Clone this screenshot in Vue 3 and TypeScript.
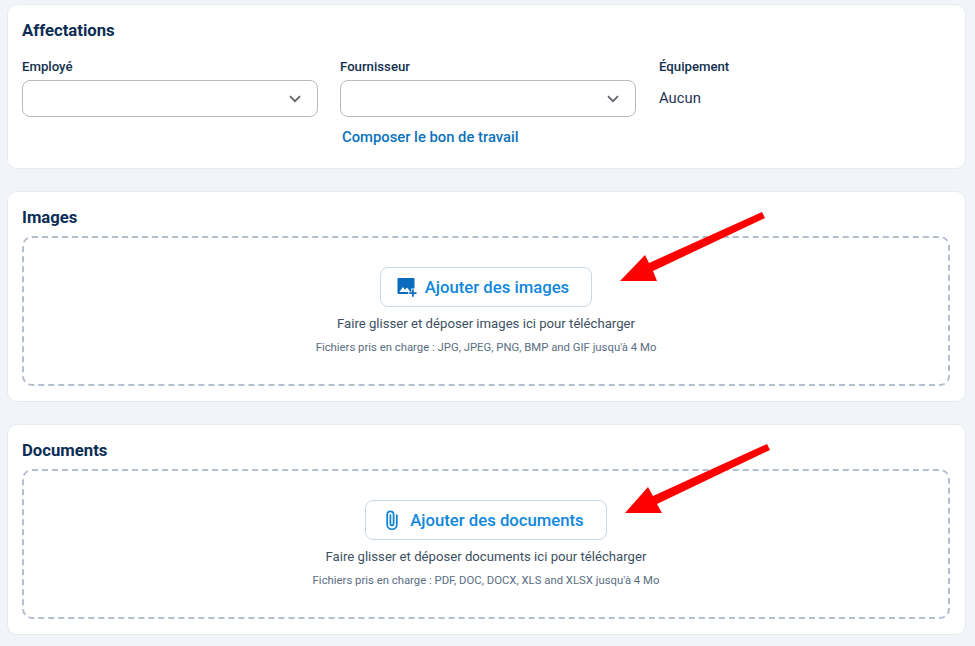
<template>
  <div class="page">
    <section class="card card-top">
      <h2 class="title">Affectations</h2>
      <div class="fields">
        <div class="field">
          <label class="label">Employé</label>
          <div class="select">
            <svg class="chevron" viewBox="0 0 12 8"><path d="M1 1.2l5 5 5-5" /></svg>
          </div>
        </div>
        <div class="field">
          <label class="label">Fournisseur</label>
          <div class="select">
            <svg class="chevron" viewBox="0 0 12 8"><path d="M1 1.2l5 5 5-5" /></svg>
          </div>
          <a class="link">Composer le bon de travail</a>
        </div>
        <div class="field">
          <label class="label">Équipement</label>
          <div class="value">Aucun</div>
        </div>
      </div>
    </section>

    <section v-for="zone in zones" :key="zone.title" class="card card-zone">
      <h2 class="title">{{ zone.title }}</h2>
      <div class="dropzone">
        <button class="add" type="button">
          <svg v-if="zone.icon === 'image'" class="add-icon" viewBox="0 0 20 20">
            <path fill="#0b6cbf" d="M1.5 1h15a1 1 0 0 1 1 1v9.6h-3.2v3.1h-3V17H1.5a1 1 0 0 1-1-1V2a1 1 0 0 1 1-1z" />
            <path fill="#fff" d="M2.4 15l3.4-4.9 2.2 2.7 2-2.4 2.6 3.4V15z" />
            <path fill="#0b6cbf" d="M15 12.6h1.8v2.6h2.7v1.8h-2.7v2.7H15V17h-2.7v-1.8H15z" />
          </svg>
          <svg v-else class="add-icon" viewBox="0 0 20 20">
            <path fill="none" stroke="#1285d6" stroke-width="1.8" stroke-linecap="round" d="M14.8 5.2v9.3a4.8 4.8 0 0 1-9.6 0V4.6a3.2 3.2 0 0 1 6.4 0v9.2a1.6 1.6 0 0 1-3.2 0V5.2" />
          </svg>
          <span>{{ zone.button }}</span>
        </button>
        <p class="hint">{{ zone.hint }}</p>
        <p class="formats">{{ zone.formats }}</p>
      </div>
    </section>

    <svg class="arrows" width="975" height="646" viewBox="0 0 975 646">
      <path fill="#fe0000" d="M762 212L765 218 653 271 657 281 620 281 645 255 649 263z" />
      <path fill="#fe0000" d="M767 444L770 450 657 504 662 513 625 513 648 487 653 496z" />
    </svg>
  </div>
</template>

<script setup lang="ts">
interface Zone {
  title: string
  icon: 'image' | 'clip'
  button: string
  hint: string
  formats: string
}

const zones: Zone[] = [
  {
    title: 'Images',
    icon: 'image',
    button: 'Ajouter des images',
    hint: 'Faire glisser et déposer images ici pour télécharger',
    formats: "Fichiers pris en charge : JPG, JPEG, PNG, BMP and GIF jusqu'à 4 Mo",
  },
  {
    title: 'Documents',
    icon: 'clip',
    button: 'Ajouter des documents',
    hint: 'Faire glisser et déposer documents ici pour télécharger',
    formats: "Fichiers pris en charge : PDF, DOC, DOCX, XLS and XLSX jusqu'à 4 Mo",
  },
]
</script>

<style>
html,
body {
  margin: 0;
  background: #f1f4f9;
}
</style>

<style scoped>
.page {
  position: relative;
  width: 975px;
  height: 646px;
  box-sizing: border-box;
  padding: 4px 9px 0 7px;
  display: flex;
  flex-direction: column;
  gap: 22px;
  overflow: hidden;
  font-family: Roboto, "Liberation Sans", sans-serif;
  color: #0f2d4e;
}

.card {
  box-sizing: border-box;
  background: #fff;
  border: 1px solid #e7eaee;
  border-radius: 10px;
  padding: 0 15px 0 14px;
}

.card-top {
  height: 165px;
}

.card-zone {
  height: 211px;
}

.title {
  margin: 0;
  font-size: 16.7px;
  line-height: 19px;
  font-weight: 700;
  color: #0b2d55;
  padding-top: 16px;
}

.fields {
  display: grid;
  grid-template-columns: 296px 297px 1fr;
  column-gap: 22px;
  margin-top: 19px;
}

.field {
  display: flex;
  flex-direction: column;
}

.label {
  font-size: 13.2px;
  line-height: 16px;
  font-weight: 500;
  color: #12304f;
  margin-bottom: 5px;
}

.select {
  box-sizing: border-box;
  width: 296px;
  height: 37px;
  border: 1px solid #b9b9b9;
  border-radius: 8px;
  display: flex;
  align-items: center;
  justify-content: flex-end;
  padding-right: 16px;
}

.chevron {
  width: 12px;
  height: 8px;
  fill: none;
  stroke: #5f6368;
  stroke-width: 1.7;
}

.link {
  font-size: 14.8px;
  line-height: 17px;
  font-weight: 500;
  color: #0b72bb;
  margin: 12px 0 0 2px;
}

.value {
  font-size: 14.8px;
  line-height: 18px;
  color: #1c3550;
  margin-top: 9px;
}

.dropzone {
  box-sizing: border-box;
  height: 150px;
  margin-top: 9px;
  border: 2px dashed #b3bfcc;
  border-radius: 10px;
  display: flex;
  flex-direction: column;
  align-items: center;
  padding-top: 29px;
}

.add {
  box-sizing: border-box;
  height: 40px;
  display: flex;
  align-items: center;
  gap: 8px;
  padding: 0 22px 0 16px;
  background: #fff;
  border: 1px solid #ccd8e6;
  border-radius: 8px;
  font-family: inherit;
  font-size: 16.7px;
  font-weight: 500;
  color: #0f87dc;
}

.add-icon {
  width: 20px;
  height: 20px;
  flex: none;
}

.hint {
  margin: 8.5px 0 0;
  font-size: 13.16px;
  line-height: 16px;
  color: #3d4f63;
}

.formats {
  margin: 8.5px 0 0;
  font-size: 11.33px;
  line-height: 14px;
  color: #5a6d82;
}

.arrows {
  position: absolute;
  left: 0;
  top: 0;
  pointer-events: none;
}
</style>
